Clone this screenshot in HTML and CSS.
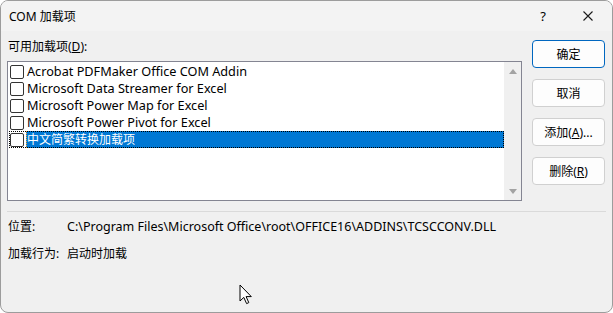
FILE: index.html
```html
<!DOCTYPE html>
<html lang="zh-CN">
<head>
    <meta charset="UTF-8">
    <title>COM 加载项</title>
    <link rel="stylesheet" href="styles.css">
</head>
<body>
    <div class="dialog">
        <div class="titlebar">
            <span class="title">COM 加载项</span>
            <span class="help">?</span>
            <span class="close">
                <svg width="10" height="10" viewBox="0 0 10 10"><path d="M0.5 0.5 L9.5 9.5 M9.5 0.5 L0.5 9.5" stroke="#1a1a1a" stroke-width="1.1" fill="none"/></svg>
            </span>
        </div>

        <div class="content">
            <div class="main">
                <div class="label">可用加载项(<u>D</u>):</div>
                <div class="listbox">
                    <div class="items">
                        <div class="row"><span class="check"></span><span class="text">Acrobat PDFMaker Office COM Addin</span></div>
                        <div class="row"><span class="check"></span><span class="text">Microsoft Data Streamer for Excel</span></div>
                        <div class="row"><span class="check"></span><span class="text">Microsoft Power Map for Excel</span></div>
                        <div class="row"><span class="check"></span><span class="text">Microsoft Power Pivot for Excel</span></div>
                        <div class="row selected"><span class="check"></span><span class="text">中文简繁转换加载项</span></div>
                    </div>
                    <div class="scrollbar">
                        <span class="arrow up"></span>
                        <span class="arrow down"></span>
                    </div>
                </div>
            </div>

            <div class="buttons">
                <button class="btn default">确定</button>
                <button class="btn">取消</button>
                <button class="btn">添加(<u>A</u>)...</button>
                <button class="btn">删除(<u>R</u>)</button>
            </div>
        </div>

        <div class="separator"></div>

        <div class="info">
            <span>位置:</span>
            <span class="path">C:\Program Files\Microsoft Office\root\OFFICE16\ADDINS\TCSCCONV.DLL</span>
            <span>加载行为:</span>
            <span>启动时加载</span>
        </div>

        <svg class="cursor" width="14" height="22" viewBox="0 0 14 22">
            <path d="M1 1 L1 17 L4.8 13.4 L7.6 19.6 L9.8 18.6 L7.1 12.6 L12.3 12.6 Z" fill="#fff" stroke="#000" stroke-width="1" stroke-linejoin="round"/>
        </svg>
    </div>
</body>
</html>
```

FILE: styles.css
```css
body {
    margin: 0;
    background-color: #fff;
    font-family: "Noto Sans", "Noto Sans CJK SC", sans-serif;
    font-size: 12px;
    color: #000;
}

.dialog {
    position: relative;
    width: 613px;
    height: 313px;
    box-sizing: border-box;
    border: 1px solid #9c9c9c;
    border-radius: 8px;
    background-color: #f0f0f0;
    overflow: hidden;
}

.titlebar {
    display: flex;
    align-items: center;
    height: 30px;
    padding-left: 8px;
    background-color: #f3f3f3;
}

.title {
    flex: 1;
}

.help {
    width: 20px;
    margin-right: 25px;
    text-align: center;
    font-size: 13px;
}

.close {
    display: flex;
    width: 20px;
    margin-right: 14px;
    justify-content: center;
}

.content {
    display: flex;
    padding: 0 6px 0 6px;
}

.main {
    width: 515px;
}

.label {
    height: 16px;
    line-height: 16px;
    padding: 8px 0 6px 1px;
}

.listbox {
    display: flex;
    height: 138px;
    border: 1px solid #848592;
    background-color: #fff;
}

.items {
    flex: 1;
    padding: 1px 0 0 1px;
}

.row {
    display: flex;
    align-items: center;
    height: 17px;
}

.check {
    width: 12px;
    height: 12px;
    margin: 0 2px 0 1px;
    border: 1px solid #333;
    border-radius: 2px;
    background-color: #fff;
}

.text {
    height: 17px;
    line-height: 17px;
    padding-left: 1px;
    font-size: 12.7px;
}

.row.selected {
    outline: 1px dotted #000;
    outline-offset: -1px;
}

.row.selected .text {
    flex: 1;
    font-size: 12px;
    background-color: #0078d4;
    color: #fff;
    outline: 1px dotted #f7a233;
    outline-offset: -1px;
}

.scrollbar {
    display: flex;
    flex-direction: column;
    justify-content: space-between;
    align-items: center;
    width: 17px;
    padding: 7px 0 6px;
    background-color: #f0f0f0;
}

.arrow {
    width: 0;
    height: 0;
    border-left: 4px solid transparent;
    border-right: 4px solid transparent;
}

.arrow.up {
    border-bottom: 5px solid #a3a3a3;
}

.arrow.down {
    border-top: 5px solid #a3a3a3;
}

.buttons {
    display: flex;
    flex-direction: column;
    gap: 11px;
    margin: 9px 0 0 10px;
}

.btn {
    width: 73px;
    height: 28px;
    padding: 0;
    border: 1px solid #d0d0d0;
    border-radius: 4px;
    background-color: #fdfdfd;
    font-family: inherit;
    font-size: 12px;
    color: #000;
}

.btn.default {
    border-color: #0067c0;
}

.separator {
    height: 1px;
    margin: 10px 6px 0 6px;
    background-color: #dadada;
}

.info {
    display: grid;
    grid-template-columns: 59px auto;
    row-gap: 11px;
    padding: 7px 0 0 7px;
    line-height: 16px;
}

.path {
    font-size: 12.5px;
}

.cursor {
    position: absolute;
    left: 238px;
    top: 283px;
}
```
